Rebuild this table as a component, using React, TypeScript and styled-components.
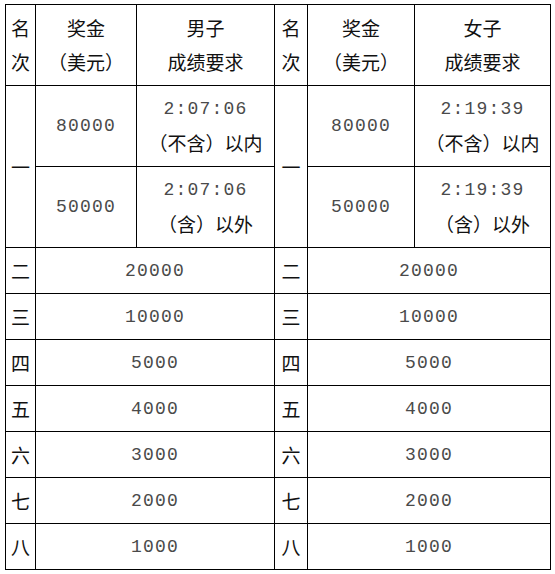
import React from "react";
import styled, {createGlobalStyle} from "styled-components";

const GlobalStyle = createGlobalStyle`
    body {
        margin: 0;
        background: #fff;
    }
`;

type Tier = {rank: string; prize: string; time: string; note: string};
type Place = {rank: string; prize: string};

const firstMen: Tier[] = [
    {rank: "一", prize: "80000", time: "2:07:06", note: "（不含）以内"},
    {rank: "一", prize: "50000", time: "2:07:06", note: "（含）以外"},
];
const firstWomen: Tier[] = [
    {rank: "一", prize: "80000", time: "2:19:39", note: "（不含）以内"},
    {rank: "一", prize: "50000", time: "2:19:39", note: "（含）以外"},
];

const places: Place[] = [
    {rank: "二", prize: "20000"},
    {rank: "三", prize: "10000"},
    {rank: "四", prize: "5000"},
    {rank: "五", prize: "4000"},
    {rank: "六", prize: "3000"},
    {rank: "七", prize: "2000"},
    {rank: "八", prize: "1000"},
];

const App = () => {
    const sides = [
        {label: "男子", tiers: firstMen},
        {label: "女子", tiers: firstWomen},
    ];
    return (
        <Page>
            <GlobalStyle/>
            <PrizeGrid>
                {sides.map(side => (
                    <React.Fragment key={`head-${side.label}`}>
                        <Cell><Zh>名<br/>次</Zh></Cell>
                        <Cell><Zh>奖金<br/>（美元）</Zh></Cell>
                        <Cell><Zh>{side.label}<br/>成绩要求</Zh></Cell>
                    </React.Fragment>
                ))}
                {sides.map(side => (
                    <React.Fragment key={`first-${side.label}`}>
                        <Cell $rows={2}><Zh>一</Zh></Cell>
                        <Cell><Num>{side.tiers[0].prize}</Num></Cell>
                        <Cell>
                            <Stack>
                                <Num>{side.tiers[0].time}</Num>
                                <Zh>{side.tiers[0].note}</Zh>
                            </Stack>
                        </Cell>
                    </React.Fragment>
                ))}
                {sides.map(side => (
                    <React.Fragment key={`second-${side.label}`}>
                        <Cell><Num>{side.tiers[1].prize}</Num></Cell>
                        <Cell>
                            <Stack>
                                <Num>{side.tiers[1].time}</Num>
                                <Zh>{side.tiers[1].note}</Zh>
                            </Stack>
                        </Cell>
                    </React.Fragment>
                ))}
                {places.map(place => sides.map(side => (
                    <React.Fragment key={`${place.rank}-${side.label}`}>
                        <Cell><Zh>{place.rank}</Zh></Cell>
                        <Cell $span={2}><Num>{place.prize}</Num></Cell>
                    </React.Fragment>
                )))}
            </PrizeGrid>
        </Page>
    );
};
export default App

const Page = styled.main`
    padding: 4px 0 0 5px;
`;

const PrizeGrid = styled.div`
    display: inline-grid;
    grid-template-columns: 29px 100px 137px 32px 106px 135px;
    grid-template-rows: 80px 80px 80px repeat(7, 45px);
    gap: 1px;
    padding: 1px;
    background: #000;
`;

const Cell = styled.div<{ $span?: number; $rows?: number }>`
    grid-column: span ${props => props.$span ?? 1};
    grid-row: span ${props => props.$rows ?? 1};
    display: flex;
    align-items: center;
    justify-content: center;
    background: #fff;
    text-align: center;
    line-height: 34px;
`;

const Stack = styled.div`
    display: flex;
    flex-direction: column;
    align-items: center;
    line-height: 33px;
`;

const Zh = styled.span`
    font-family: "Noto Sans CJK SC", "Noto Sans", sans-serif;
    font-size: 19px;
    color: #111;
`;

const Num = styled.span`
    font-family: "Liberation Mono", monospace;
    font-size: 18px;
    letter-spacing: 1.2px;
    color: #4a4a4a;
`;
